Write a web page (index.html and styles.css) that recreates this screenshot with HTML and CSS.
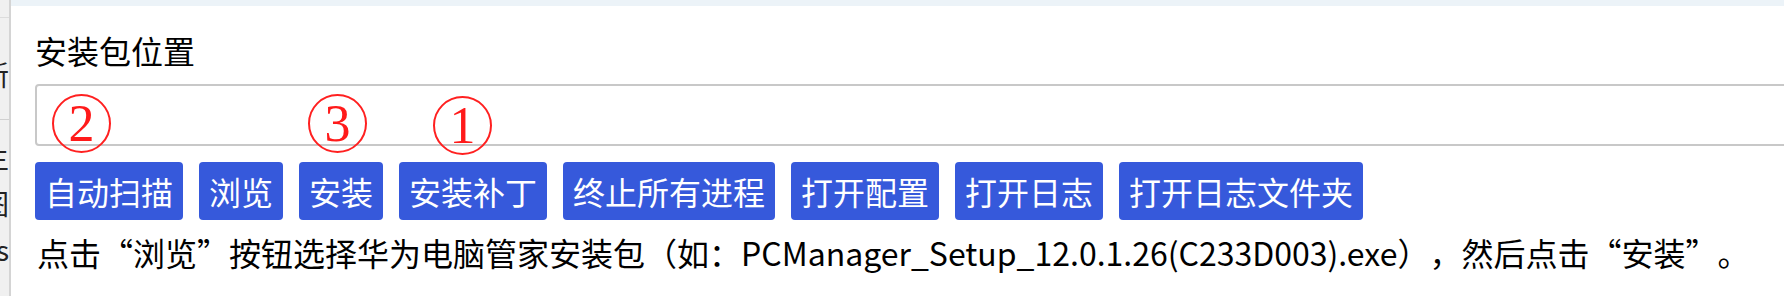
FILE: index.html
```html
<!DOCTYPE html>
<html lang="zh-CN">
<head>
    <meta charset="UTF-8">
    <meta name="viewport" content="width=device-width, initial-scale=1.0">
    <title>华为电脑管家安装工具</title>
    <link rel="stylesheet" href="styles.css">
</head>
<body>
    <div class="window">
        <div class="sidebar">
            <div class="side-group">
                <div class="side-item">检查更新</div>
            </div>
            <div class="side-item side-gap">主</div>
            <div class="side-item">图</div>
            <div class="side-item">s</div>
        </div>
        <div class="main">
            <div class="topbar"></div>
            <div class="panel">
                <div class="label">安装包位置</div>
                <div class="path-wrap">
                    <input type="text" class="path" id="pkgPath">
                    <!-- red step marks drawn over the screenshot -->
                    <span class="mark mark-a">2</span>
                    <span class="mark mark-b">3</span>
                    <span class="mark mark-c">1</span>
                </div>
                <div class="buttons">
                    <button>自动扫描</button>
                    <button>浏览</button>
                    <button>安装</button>
                    <button>安装补丁</button>
                    <button>终止所有进程</button>
                    <button>打开配置</button>
                    <button>打开日志</button>
                    <button>打开日志文件夹</button>
                </div>
                <p class="hint">点击“浏览”按钮选择华为电脑管家安装包（如：<span class="file">PCManager_Setup_12.0.1.26(C233D003).exe</span>），然后点击“安装”。</p>
            </div>
        </div>
    </div>
</body>
</html>
```

FILE: styles.css
```css
html, body {
    margin: 0;
    padding: 0;
    height: 100%;
    overflow: hidden;
    background-color: #fff;
}
body {
    font-family: "Noto Sans CJK SC", sans-serif;
    color: #000;
    text-spacing-trim: space-all;
}
.window {
    display: flex;
    height: 100%;
}
.sidebar {
    width: 9px;
    flex-shrink: 0;
    background-color: #f0f0f0;
    border-right: 2px solid #d4d4d4;
    overflow: hidden;
    display: flex;
    flex-direction: column;
    align-items: flex-end;
}
.side-group {
    margin-top: 17px;
    padding: 38px 0 27px;
    border-top: 1px solid #dcdcdc;
    border-bottom: 1px solid #d0d0d0;
    display: flex;
    justify-content: flex-end;
    width: 100%;
}
.side-item {
    font-size: 28px;
    line-height: 36px;
    white-space: nowrap;
    color: #222;
    margin-top: 10px;
}
.side-group .side-item {
    margin-top: 0;
}
.sidebar .side-gap {
    margin-top: 19px;
}
.main {
    flex: 1;
    min-width: 0;
}
.topbar {
    height: 6px;
    background-color: #ecf3f8;
}
.panel {
    padding: 22px 0 0 24px;
}
.label {
    font-size: 32px;
    line-height: 44px;
}
.path-wrap {
    position: relative;
    margin-top: 12px;
}
.path {
    display: block;
    box-sizing: border-box;
    width: calc(100% + 20px);
    height: 62px;
    border: 2px solid #c8c8c8;
    border-radius: 4px;
    background-color: #fff;
    outline: none;
}
.mark {
    position: absolute;
    top: 10px;
    width: 55px;
    height: 55px;
    border: 2px solid #ff2020;
    border-radius: 50%;
    color: #ff1a1a;
    font-family: "Liberation Serif", serif;
    font-size: 52px;
    line-height: 56px;
    text-align: center;
}
.mark-a {
    left: 17px;
}
.mark-b {
    left: 273px;
}
.mark-c {
    left: 398px;
    top: 12px;
}
.buttons {
    display: flex;
    gap: 16px;
    margin-top: 16px;
}
.buttons button {
    font-family: "Noto Sans CJK SC", sans-serif;
    font-size: 32px;
    line-height: 44px;
    padding: 7px 10px;
    border: none;
    border-radius: 4px;
    background-color: #3659db;
    color: #fff;
    cursor: pointer;
}
.hint {
    margin: 10px 0 0 2px;
    font-size: 32px;
    line-height: 44px;
    white-space: nowrap;
}
```
